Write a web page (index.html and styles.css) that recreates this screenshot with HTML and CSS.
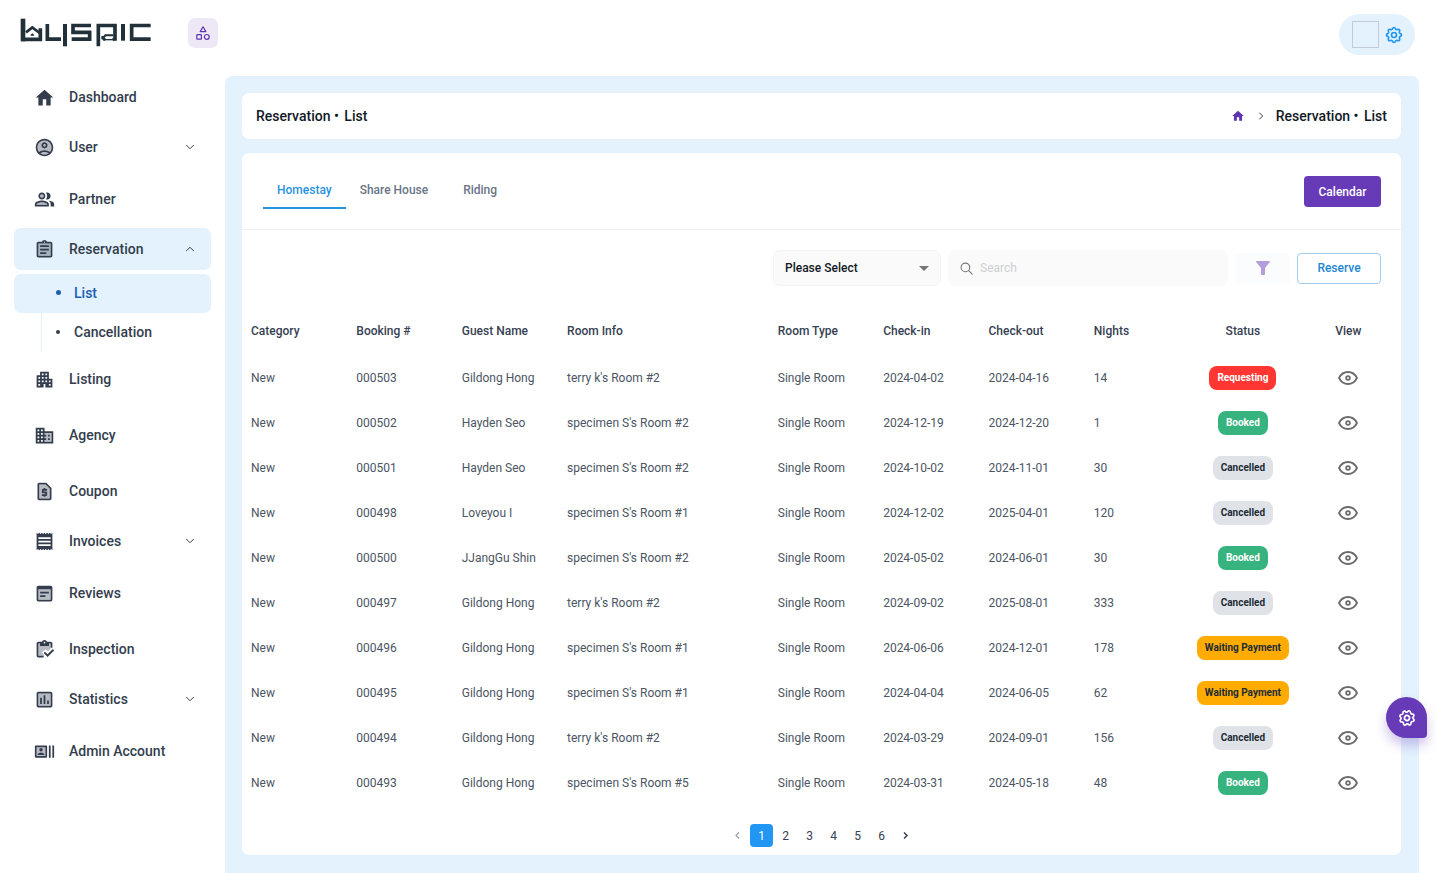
FILE: index.html
```html
<!DOCTYPE html>
<html lang="en">
<head>
<meta charset="utf-8">
<meta name="viewport" content="width=device-width, initial-scale=1">
<title>Reservation • List</title>
<link rel="stylesheet" href="styles.css">
</head>
<body>
<svg class="sprite" aria-hidden="true">
  <symbol id="eye" viewBox="0 0 20 14"><path d="M1 7C3 3 6.200 1 10 1s7 2 9 6c-2 4-5.200 6-9 6S3 11 1 7z" fill="none" stroke="currentColor" stroke-width="1.800" stroke-linejoin="round"/><circle cx="10" cy="7" r="1.900" fill="none" stroke="currentColor" stroke-width="1.700"/></symbol>
  <symbol id="down" viewBox="0 0 24 24"><path d="M6 9l6 6 6-6" fill="none" stroke="currentColor" stroke-width="1.700" stroke-linecap="round" stroke-linejoin="round"/></symbol>
  <symbol id="up" viewBox="0 0 24 24"><path d="M6 15l6-6 6 6" fill="none" stroke="currentColor" stroke-width="1.700" stroke-linecap="round" stroke-linejoin="round"/></symbol>
  <symbol id="home" viewBox="0 0 24 24"><path d="M10 20v-6h4v6h5v-8h3L12 3 2 12h3v8z"/></symbol>
  <symbol id="gear" viewBox="0 0 24 24"><g fill="none" stroke="currentColor" stroke-linejoin="round"><path d="M10.325 4.317c.426-1.756 2.924-1.756 3.350 0a1.724 1.724 0 0 0 2.573 1.066c1.543-.94 3.310.826 2.370 2.370a1.724 1.724 0 0 0 1.065 2.572c1.756.426 1.756 2.924 0 3.350a1.724 1.724 0 0 0-1.066 2.573c.94 1.543-.826 3.310-2.370 2.370a1.724 1.724 0 0 0-2.572 1.065c-.426 1.756-2.924 1.756-3.350 0a1.724 1.724 0 0 0-2.573-1.066c-1.543.94-3.310-.826-2.370-2.370a1.724 1.724 0 0 0-1.065-2.572c-1.756-.426-1.756-2.924 0-3.350a1.724 1.724 0 0 0 1.066-2.573c-.94-1.543.826-3.310 2.370-2.370 1 .608 2.296.07 2.572-1.065z"/><circle cx="12" cy="12" r="3"/></g></symbol>
</svg>

<header class="topbar">
  <a class="logo" href="#" aria-label="buspic">
    <svg viewBox="60 55 396 90" aria-hidden="true">
      <g fill="none" stroke="#22303a" stroke-width="11">
        <path stroke-width="14" d="M69 57v68"/>
        <path d="M64 119h57V86"/>
        <path stroke-width="8" d="M78 98l19-15 26 20"/>
        <path d="M142 73v45.500h41"/>
        <path stroke-width="12" d="M195 73v67"/>
        <path d="M273 77.500h-54V98h50v20.500h-54"/>
        <path stroke-width="11" d="M295 140V77.500h50V123"/>
        <path stroke-width="6" d="M307 119v-7h5l4-5h24"/>
        <path stroke-width="4" d="M318 120h18"/>
        <path stroke-width="12" d="M369 73v50"/>
        <path d="M452 77.500h-57v41h57"/>
      </g>
      <g fill="#22303a"><path d="M92 108v-3l5-4 5 4v3z"/><circle cx="313" cy="119" r="5"/><circle cx="341" cy="119" r="5"/></g>
    </svg>
  </a>
  <button class="menu-toggle" type="button" aria-label="Toggle menu">
    <svg viewBox="0 0 14 14" aria-hidden="true"><g fill="none" stroke="currentColor" stroke-width="1.200" stroke-linejoin="round"><path d="M7 .8l2.800 4.800H4.200z"/><rect x=".8" y="8.600" width="4.600" height="4.600" rx=".6"/><circle cx="10.800" cy="10.900" r="2.400"/></g></svg>
  </button>
  <button class="account" type="button" aria-label="Account settings">
    <span class="avatar"></span>
    <svg aria-hidden="true"><use href="#gear"/></svg>
  </button>
</header>

<div class="layout">
  <nav class="sidebar" aria-label="Main">
    <ul class="nav">
      <li class="nav-single"><a class="nav-item" href="#"><svg viewBox="0 0 24 24" class="nav-icon"><path d="M10 21v-7h4v7h5v-9h3L12 3 2 12h3v9z"/></svg><span>Dashboard</span></a></li>
      <li class="nav-group"><button class="nav-item" type="button" aria-expanded="false"><svg viewBox="0 0 24 24" class="nav-icon"><circle cx="12" cy="12" r="8" class="shade"/><path d="M12 2C6.480 2 2 6.480 2 12s4.480 10 10 10 10-4.480 10-10S17.520 2 12 2zM7.350 18.500C8.660 17.560 10.260 17 12 17s3.340.56 4.650 1.500C15.340 19.440 13.740 20 12 20s-3.340-.56-4.650-1.500zm10.790-1.380C16.450 15.800 14.320 15 12 15s-4.450.8-6.140 2.120C4.700 15.730 4 13.950 4 12c0-4.420 3.580-8 8-8s8 3.580 8 8c0 1.950-.7 3.730-1.860 5.120z"/><path d="M12 6c-1.930 0-3.500 1.570-3.500 3.500S10.070 13 12 13s3.500-1.570 3.500-3.500S13.930 6 12 6zm0 5c-.83 0-1.500-.67-1.500-1.500S11.170 8 12 8s1.500.67 1.500 1.500S12.830 11 12 11z"/></svg><span>User</span><svg class="chevron"><use href="#down"/></svg></button></li>
      <li class="nav-single"><a class="nav-item" href="#"><svg viewBox="0 0 24 24" class="nav-icon"><path class="shade" d="M3 18h12v-1c0-1-3-2-6-2s-6 1-6 2zM9 6a2 2 0 1 0 0 4 2 2 0 0 0 0-4z"/><path d="M16.670 13.130C18.040 14.060 19 15.320 19 17v3h4v-3c0-2.180-3.570-3.470-6.330-3.870zM15 12c2.210 0 4-1.790 4-4s-1.790-4-4-4c-.47 0-.91.1-1.330.24C14.500 5.270 15 6.580 15 8s-.5 2.730-1.330 3.760c.42.14.86.24 1.330.24zM9 12c2.210 0 4-1.790 4-4s-1.790-4-4-4-4 1.790-4 4 1.790 4 4 4zm0-6c1.100 0 2 .9 2 2s-.9 2-2 2-2-.9-2-2 .9-2 2-2zM9 13c-2.670 0-8 1.340-8 4v3h16v-3c0-2.660-5.330-4-8-4zm6 5H3v-.99C3.200 16.290 6.300 15 9 15s5.800 1.290 6 2v1z"/></svg><span>Partner</span></a></li>
      <li class="nav-group open"><button class="nav-item active" type="button" aria-expanded="true"><svg viewBox="0 0 24 24" class="nav-icon"><path class="shade" d="M5 5h14v14H5z"/><path d="M7 15h7v2H7zm0-4h10v2H7zm0-4h10v2H7z"/><path d="M19 3h-4.180C14.400 1.840 13.300 1 12 1s-2.400.84-2.820 2H5c-1.100 0-2 .9-2 2v14c0 1.100.9 2 2 2h14c1.100 0 2-.9 2-2V5c0-1.100-.9-2-2-2zm-7-.25c.41 0 .75.34.75.75s-.34.75-.75.75-.75-.34-.75-.75.34-.75.75-.75zM19 19H5V5h14v14z"/></svg><span>Reservation</span><svg class="chevron"><use href="#up"/></svg></button>
        <ul class="subnav">
          <li><a class="sub-item current" href="#" aria-current="page">List</a></li>
          <li><a class="sub-item" href="#">Cancellation</a></li>
        </ul>
      </li>
      <li class="nav-single"><a class="nav-item" href="#"><svg viewBox="0 0 24 24" class="nav-icon"><path d="M17 11V3H7v4H3v14h8v-4h2v4h8V11h-4zM7 19H5v-2h2v2zm0-4H5v-2h2v2zm0-4H5V9h2v2zm4 4H9v-2h2v2zm0-4H9V9h2v2zm0-4H9V5h2v2zm4 8h-2v-2h2v2zm0-4h-2V9h2v2zm0-4h-2V5h2v2zm4 12h-2v-2h2v2zm0-4h-2v-2h2v2z"/></svg><span>Listing</span></a></li>
      <li class="nav-single"><a class="nav-item" href="#"><svg viewBox="0 0 24 24" class="nav-icon"><path class="shade" d="M12 9h8v10h-8z"/><path d="M12 7V3H2v18h20V7H12zM6 19H4v-2h2v2zm0-4H4v-2h2v2zm0-4H4V9h2v2zm0-4H4V5h2v2zm4 12H8v-2h2v2zm0-4H8v-2h2v2zm0-4H8V9h2v2zm0-4H8V5h2v2zm10 12h-8v-2h2v-2h-2v-2h2v-2h-2V9h8v10zm-2-8h-2v2h2v-2zm0 4h-2v2h2v-2z"/></svg><span>Agency</span></a></li>
      <li class="nav-single"><a class="nav-item" href="#"><svg viewBox="0 0 24 24" class="nav-icon"><path class="shade" d="M6 4h7l5 5v11H6z"/><path d="M14 2H6c-1.100 0-2 .9-2 2v16c0 1.100.89 2 2 2h12c1.100 0 2-.9 2-2V8l-6-6zm4 18H6V4h7.170L18 8.830V20z"/><path d="M11 18h2v-1h1c.55 0 1-.45 1-1v-3c0-.55-.45-1-1-1h-3v-1h4V9h-2V8h-2v1h-1c-.55 0-1 .45-1 1v3c0 .55.45 1 1 1h3v1H9v2h2z"/></svg><span>Coupon</span></a></li>
      <li class="nav-group"><button class="nav-item" type="button" aria-expanded="false"><svg viewBox="0 0 24 24" class="nav-icon"><path d="M19 17H5v-2h14v2zm0-4H5v-2h14v2zm0-4H5V7h14v2zM3 22l1.500-1.500L6 22l1.500-1.500L9 22l1.500-1.500L12 22l1.500-1.500L15 22l1.500-1.500L18 22l1.500-1.500L21 22V2l-1.500 1.500L18 2l-1.500 1.500L15 2l-1.500 1.500L12 2l-1.500 1.500L9 2 7.500 3.500 6 2 4.500 3.500 3 2v20z"/></svg><span>Invoices</span><svg class="chevron"><use href="#down"/></svg></button></li>
      <li class="nav-single"><a class="nav-item" href="#"><svg viewBox="0 0 24 24" class="nav-icon"><path class="shade" d="M5 7h14v12H5z"/><path d="M19 3H5c-1.110 0-2 .9-2 2v14c0 1.100.89 2 2 2h14c1.100 0 2-.9 2-2V5c0-1.100-.89-2-2-2zm0 16H5V7h14v12zm-2-7H7v-2h10v2zm-4 4H7v-2h6v2z"/></svg><span>Reviews</span></a></li>
      <li class="nav-single"><a class="nav-item" href="#"><svg viewBox="0 0 24 24" class="nav-icon"><path class="shade" d="M5 5h14v6l-3 3-3-2-4 3 3 4H5z"/><path d="M5 5h2v3h10V5h2v5h2V5c0-1.100-.9-2-2-2h-4.180C14.400 1.840 13.300 1 12 1s-2.400.84-2.820 2H5c-1.100 0-2 .9-2 2v14c0 1.100.9 2 2 2h6v-2H5V5z"/><path d="M7 4h10v4H7z"/><circle cx="12" cy="4" r="1" fill="#fff"/><path d="M21.500 11.500 15.500 17.500l-3-3L11 16l4.500 4.500L23 13z"/></svg><span>Inspection</span></a></li>
      <li class="nav-group"><button class="nav-item" type="button" aria-expanded="false"><svg viewBox="0 0 24 24" class="nav-icon"><path class="shade" d="M5 5h14v14H5z"/><path d="M19 3H5c-1.100 0-2 .9-2 2v14c0 1.100.9 2 2 2h14c1.100 0 2-.9 2-2V5c0-1.100-.9-2-2-2zm0 16H5V5h14v14zM7 10h2v7H7zm4-3h2v10h-2zm4 6h2v4h-2z"/></svg><span>Statistics</span><svg class="chevron"><use href="#down"/></svg></button></li>
      <li class="nav-single"><a class="nav-item" href="#"><svg viewBox="0 0 24 24" class="nav-icon"><path class="shade" d="M3 7h10v10H3z"/><path d="M21 5h2v14h-2zM17 5h2v14h-2zM14 5H2c-.55 0-1 .45-1 1v12c0 .55.45 1 1 1h12c.55 0 1-.45 1-1V6c0-.55-.45-1-1-1zm-1 12H3V7h10v10z"/><circle cx="8" cy="9.940" r="1.950"/><path d="M11.890 15.350c0-1.300-2.590-1.950-3.890-1.950s-3.890.65-3.890 1.950V16h7.780v-.65z"/></svg><span>Admin Account</span></a></li>
    </ul>
  </nav>

  <main class="main">
    <section class="card titlebar">
      <h1 class="title">Reservation <span class="dot">•</span> List</h1>
      <nav class="crumbs" aria-label="Breadcrumb">
        <a class="crumb-home" href="#" aria-label="Home"><svg><use href="#home"/></svg></a>
        <svg class="crumb-sep" viewBox="0 0 24 24" aria-hidden="true"><path d="M8 4l8 8-8 8" fill="none" stroke="currentColor" stroke-width="2.400"/></svg>
        <span class="title">Reservation <span class="dot">•</span> List</span>
      </nav>
    </section>

    <section class="card">
      <div class="tabs-row">
        <div class="tabs" role="tablist">
          <button class="tab selected" role="tab" aria-selected="true" type="button">Homestay</button>
          <button class="tab" role="tab" aria-selected="false" type="button">Share House</button>
          <button class="tab" role="tab" aria-selected="false" type="button">Riding</button>
        </div>
        <button class="btn btn-primary" type="button">Calendar</button>
      </div>

      <form class="filters">
        <div class="select-box">
          <select aria-label="Search field"><option>Please Select</option></select>
          <svg viewBox="0 0 10 5" aria-hidden="true"><path d="M0 0h10L5 5z"/></svg>
        </div>
        <label class="search-box">
          <svg viewBox="0 0 24 24" aria-hidden="true"><g fill="none" stroke="currentColor" stroke-width="2" stroke-linecap="round"><circle cx="10" cy="10" r="8"/><path d="M16 16l6.500 6.500"/></g></svg>
          <input type="text" placeholder="Search" aria-label="Search">
        </label>
        <button class="filter-btn" type="button" aria-label="Filter"><svg viewBox="0 0 14 14" aria-hidden="true"><path d="M.6 0h12.800c.6 0 .8.600.4 1L9 7v6.200c0 .5-.3.8-.8.8H5.800c-.5 0-.8-.3-.8-.8V7L.2 1C-.2.600 0 0 .6 0z"/></svg></button>
        <button class="btn btn-outline" type="button">Reserve</button>
      </form>

      <table class="bookings">
        <colgroup><col><col><col><col class="wide"><col><col><col><col><col><col></colgroup>
        <thead>
          <tr><th>Category</th><th>Booking #</th><th>Guest Name</th><th>Room Info</th><th>Room Type</th><th>Check-in</th><th>Check-out</th><th>Nights</th><th class="center">Status</th><th class="center">View</th></tr>
        </thead>
        <tbody>
          <tr><td>New</td><td>000503</td><td>Gildong Hong</td><td>terry k's Room #2</td><td>Single Room</td><td>2024-04-02</td><td>2024-04-16</td><td>14</td><td class="center"><span class="badge requesting">Requesting</span></td><td class="center"><button class="view" type="button" aria-label="View 000503"><svg><use href="#eye"/></svg></button></td></tr>
          <tr><td>New</td><td>000502</td><td>Hayden Seo</td><td>specimen S's Room #2</td><td>Single Room</td><td>2024-12-19</td><td>2024-12-20</td><td>1</td><td class="center"><span class="badge booked">Booked</span></td><td class="center"><button class="view" type="button" aria-label="View 000502"><svg><use href="#eye"/></svg></button></td></tr>
          <tr><td>New</td><td>000501</td><td>Hayden Seo</td><td>specimen S's Room #2</td><td>Single Room</td><td>2024-10-02</td><td>2024-11-01</td><td>30</td><td class="center"><span class="badge cancelled">Cancelled</span></td><td class="center"><button class="view" type="button" aria-label="View 000501"><svg><use href="#eye"/></svg></button></td></tr>
          <tr><td>New</td><td>000498</td><td>Loveyou I</td><td>specimen S's Room #1</td><td>Single Room</td><td>2024-12-02</td><td>2025-04-01</td><td>120</td><td class="center"><span class="badge cancelled">Cancelled</span></td><td class="center"><button class="view" type="button" aria-label="View 000498"><svg><use href="#eye"/></svg></button></td></tr>
          <tr><td>New</td><td>000500</td><td>JJangGu Shin</td><td>specimen S's Room #2</td><td>Single Room</td><td>2024-05-02</td><td>2024-06-01</td><td>30</td><td class="center"><span class="badge booked">Booked</span></td><td class="center"><button class="view" type="button" aria-label="View 000500"><svg><use href="#eye"/></svg></button></td></tr>
          <tr><td>New</td><td>000497</td><td>Gildong Hong</td><td>terry k's Room #2</td><td>Single Room</td><td>2024-09-02</td><td>2025-08-01</td><td>333</td><td class="center"><span class="badge cancelled">Cancelled</span></td><td class="center"><button class="view" type="button" aria-label="View 000497"><svg><use href="#eye"/></svg></button></td></tr>
          <tr><td>New</td><td>000496</td><td>Gildong Hong</td><td>specimen S's Room #1</td><td>Single Room</td><td>2024-06-06</td><td>2024-12-01</td><td>178</td><td class="center"><span class="badge waiting">Waiting Payment</span></td><td class="center"><button class="view" type="button" aria-label="View 000496"><svg><use href="#eye"/></svg></button></td></tr>
          <tr><td>New</td><td>000495</td><td>Gildong Hong</td><td>specimen S's Room #1</td><td>Single Room</td><td>2024-04-04</td><td>2024-06-05</td><td>62</td><td class="center"><span class="badge waiting">Waiting Payment</span></td><td class="center"><button class="view" type="button" aria-label="View 000495"><svg><use href="#eye"/></svg></button></td></tr>
          <tr><td>New</td><td>000494</td><td>Gildong Hong</td><td>terry k's Room #2</td><td>Single Room</td><td>2024-03-29</td><td>2024-09-01</td><td>156</td><td class="center"><span class="badge cancelled">Cancelled</span></td><td class="center"><button class="view" type="button" aria-label="View 000494"><svg><use href="#eye"/></svg></button></td></tr>
          <tr><td>New</td><td>000493</td><td>Gildong Hong</td><td>specimen S's Room #5</td><td>Single Room</td><td>2024-03-31</td><td>2024-05-18</td><td>48</td><td class="center"><span class="badge booked">Booked</span></td><td class="center"><button class="view" type="button" aria-label="View 000493"><svg><use href="#eye"/></svg></button></td></tr>
        </tbody>
      </table>

      <nav class="pager" aria-label="Pages">
        <button class="page" type="button" disabled aria-label="Previous page"><svg viewBox="0 0 24 24"><path d="M16 4l-8 8 8 8" fill="none" stroke="currentColor" stroke-width="3"/></svg></button>
        <button class="page on" type="button" aria-current="page">1</button>
        <button class="page" type="button">2</button>
        <button class="page" type="button">3</button>
        <button class="page" type="button">4</button>
        <button class="page" type="button">5</button>
        <button class="page" type="button">6</button>
        <button class="page" type="button" aria-label="Next page"><svg viewBox="0 0 24 24"><path d="M8 4l8 8-8 8" fill="none" stroke="currentColor" stroke-width="4"/></svg></button>
      </nav>
    </section>
  </main>
</div>

<button class="fab" type="button" aria-label="Customize"><svg aria-hidden="true"><use href="#gear"/></svg></button>
</body>
</html>
```
FILE: styles.css
```css
* {
  box-sizing: border-box;
}

body {
  margin: 0;
  min-height: 100vh;
  display: flex;
  flex-direction: column;
  background: #fff;
  color: #364152;
  font-family: Roboto, "Liberation Sans", sans-serif;
  font-size: 12px;
  line-height: 18px;
}

button,
input,
select {
  font: inherit;
  color: inherit;
  margin: 0;
  padding: 0;
  border: 0;
  background: none;
}

a {
  color: inherit;
  text-decoration: none;
}

ul {
  list-style: none;
  margin: 0;
  padding: 0;
}

svg {
  display: block;
  fill: currentColor;
}

.sprite {
  position: absolute;
  width: 0;
  height: 0;
}

/* Top bar */
.topbar {
  display: flex;
  align-items: center;
  padding: 14px 21px 0 20px;
}

.logo,
.menu-toggle {
  margin-bottom: 3px;
}

.logo svg {
  width: 132px;
  height: 30px;
}

.menu-toggle {
  display: grid;
  place-items: center;
  width: 30px;
  height: 30px;
  margin-left: 36px;
  border-radius: 7px;
  background: #ede7f6;
  color: #5e35b1;
}

.menu-toggle svg {
  width: 14px;
  height: 14px;
}

.account {
  display: flex;
  align-items: center;
  gap: 5px;
  height: 41px;
  margin-left: auto;
  padding: 0 11px 0 13px;
  border-radius: 24px;
  background: #e3f2fd;
  color: #2196f3;
}

.avatar {
  width: 27px;
  height: 27px;
  border: 1px solid #c3ccd4;
}

.account svg {
  width: 20px;
  height: 20px;
  stroke-width: 2;
}

/* Page frame */
.layout {
  flex: 1;
  display: flex;
}

.sidebar {
  flex: 0 0 225px;
  padding: 15px 14px 0;
}

.main {
  flex: 1;
  min-width: 0;
  margin: 21px 17px 0 0;
  padding: 17px 18px 17px 17px;
  border-radius: 7px 7px 0 0;
  background: #e3f2fd;
}

/* Side navigation */
.nav-single {
  padding: 6px 0 8px;
}

.nav-group {
  padding-bottom: 4px;
}

.nav-group.open {
  padding-bottom: 0;
}

.nav-item {
  display: flex;
  align-items: center;
  gap: 14px;
  width: 197px;
  height: 42px;
  padding: 0 14px 0 20px;
  border-radius: 7px;
  color: #333d4d;
  font-size: 14px;
  font-weight: 500;
}

.nav-item.active {
  background: #e3f2fd;
}

.nav-icon {
  width: 21px;
  height: 21px;
}

.shade {
  opacity: 0.35;
}

.chevron {
  width: 14px;
  height: 14px;
  margin-left: auto;
}

.subnav {
  margin-top: 4px;
  background: linear-gradient(#e3f2fd, #e3f2fd) 27px 0 / 1px 100% no-repeat;
}

.sub-item {
  display: flex;
  align-items: center;
  gap: 14px;
  width: 197px;
  height: 39px;
  padding: 0 0 2px 42px;
  border-radius: 7px;
  color: #333d4d;
  font-size: 14px;
  font-weight: 500;
}

.sub-item::before {
  content: "";
  width: 4px;
  height: 4px;
  border-radius: 50%;
  background: currentColor;
}

.sub-item.current {
  gap: 13px;
  background: #e3f2fd;
  color: #1e5fb4;
}

.sub-item.current::before {
  width: 5px;
  height: 5px;
}

/* Cards */
.card {
  border-radius: 7px;
  background: #fff;
}

.card + .card {
  margin-top: 14px;
}

.titlebar {
  display: flex;
  align-items: center;
  justify-content: space-between;
  height: 46px;
  padding: 0 14px;
}

.title {
  margin: 0;
  color: #121926;
  font-size: 14px;
  font-weight: 500;
}

.dot {
  padding-right: 2px;
}

.crumbs {
  display: flex;
  align-items: center;
}

.crumb-home {
  color: #5e35b1;
}

.crumb-home svg {
  width: 14px;
  height: 14px;
}

.crumb-sep {
  width: 10px;
  height: 10px;
  margin: 0 10px 0 11px;
}

/* Tabs */
.tabs-row {
  display: flex;
  align-items: flex-start;
  justify-content: space-between;
  padding: 14px 20px 20px 21px;
  border-bottom: 1px solid #eef2f6;
}

.tabs {
  display: flex;
}

.tab {
  height: 42px;
  padding: 5px 14px 0;
  border-bottom: 2px solid transparent;
  color: #697586;
  font-weight: 500;
}

.tab:last-child {
  margin-left: 7px;
}

.tab.selected {
  border-color: #2a93e0;
  color: #2a93e0;
}

.btn {
  height: 31px;
  border-radius: 4px;
  font-weight: 500;
}

.btn-primary {
  width: 77px;
  margin-top: 9px;
  background: #673ab7;
  color: #fff;
}

.btn-outline {
  width: 84px;
  border: 1px solid #9fcdea;
  color: #1e88d2;
}

/* Filters */
.filters {
  display: flex;
  align-items: center;
  justify-content: flex-end;
  gap: 7px;
  padding: 20px 20px 0;
}

.select-box {
  display: grid;
  align-items: center;
  width: 168px;
  height: 36px;
  border: 1px solid #f3f4f5;
  border-radius: 7px;
  background: #fafafa;
}

.select-box select,
.select-box svg {
  grid-area: 1 / 1;
}

.select-box select {
  width: 100%;
  height: 100%;
  padding: 0 11px;
  appearance: none;
  color: #121926;
  font-weight: 500;
}

.select-box svg {
  justify-self: end;
  width: 10px;
  height: 5px;
  margin-right: 11px;
  color: #757575;
  pointer-events: none;
}

.search-box {
  display: flex;
  align-items: center;
  gap: 7px;
  width: 280px;
  height: 36px;
  padding: 0 12px;
  border-radius: 7px;
  background: #fafafa;
}

.search-box svg {
  width: 13px;
  height: 13px;
  color: #757575;
}

.search-box input {
  flex: 1;
  min-width: 0;
  outline: 0;
}

.search-box input::placeholder {
  color: #cdcfd2;
}

.filter-btn {
  display: grid;
  place-items: center;
  width: 55px;
  height: 31px;
  border-radius: 4px;
  background: #fafcfd;
  color: #b39ddb;
}

.filter-btn svg {
  width: 14px;
  height: 14px;
}

/* Bookings table */
.bookings {
  width: 100%;
  margin-top: 21px;
  table-layout: fixed;
  border-collapse: collapse;
}

.bookings .wide {
  width: 18.18%;
}

.bookings th,
.bookings td {
  padding: 0 9px;
  text-align: left;
  white-space: nowrap;
}

.bookings th {
  height: 48px;
  font-weight: 500;
}

.bookings td {
  height: 45px;
  color: #4b5563;
}

.bookings .center {
  padding: 0;
  text-align: center;
}

.badge {
  display: inline-block;
  padding: 3px 8px;
  border-radius: 8px;
  color: #fff;
  font-size: 10px;
  font-weight: 700;
  vertical-align: middle;
}

.requesting {
  background: #ff3632;
}

.booked {
  background: #36b37e;
}

.cancelled {
  background: #dfe3e8;
  color: #212b36;
}

.waiting {
  background: #ffab00;
  color: #212b36;
}

.view {
  color: #6b6b6b;
  vertical-align: middle;
}

.view svg {
  width: 20px;
  height: 14px;
}

/* Pager */
.pager {
  display: flex;
  justify-content: center;
  gap: 1px;
  padding: 19px 0 8px;
}

.page {
  display: grid;
  place-items: center;
  width: 23px;
  height: 23px;
  border-radius: 4px;
}

.page.on {
  background: #2196f3;
  color: #fff;
}

.page svg {
  width: 9px;
  height: 9px;
}

.page:disabled {
  opacity: 0.5;
}

/* Floating settings button */
.fab {
  position: fixed;
  top: 697px;
  right: 9px;
  display: grid;
  place-items: center;
  width: 41px;
  height: 41px;
  border-radius: 50% 50% 4px 50%;
  background: #673ab7;
  box-shadow: 0 7px 12px rgba(103, 58, 183, 0.3);
  color: #fff;
}

.fab svg {
  width: 20px;
  height: 20px;
  stroke-width: 2;
  transform: rotate(20deg);
}
```
